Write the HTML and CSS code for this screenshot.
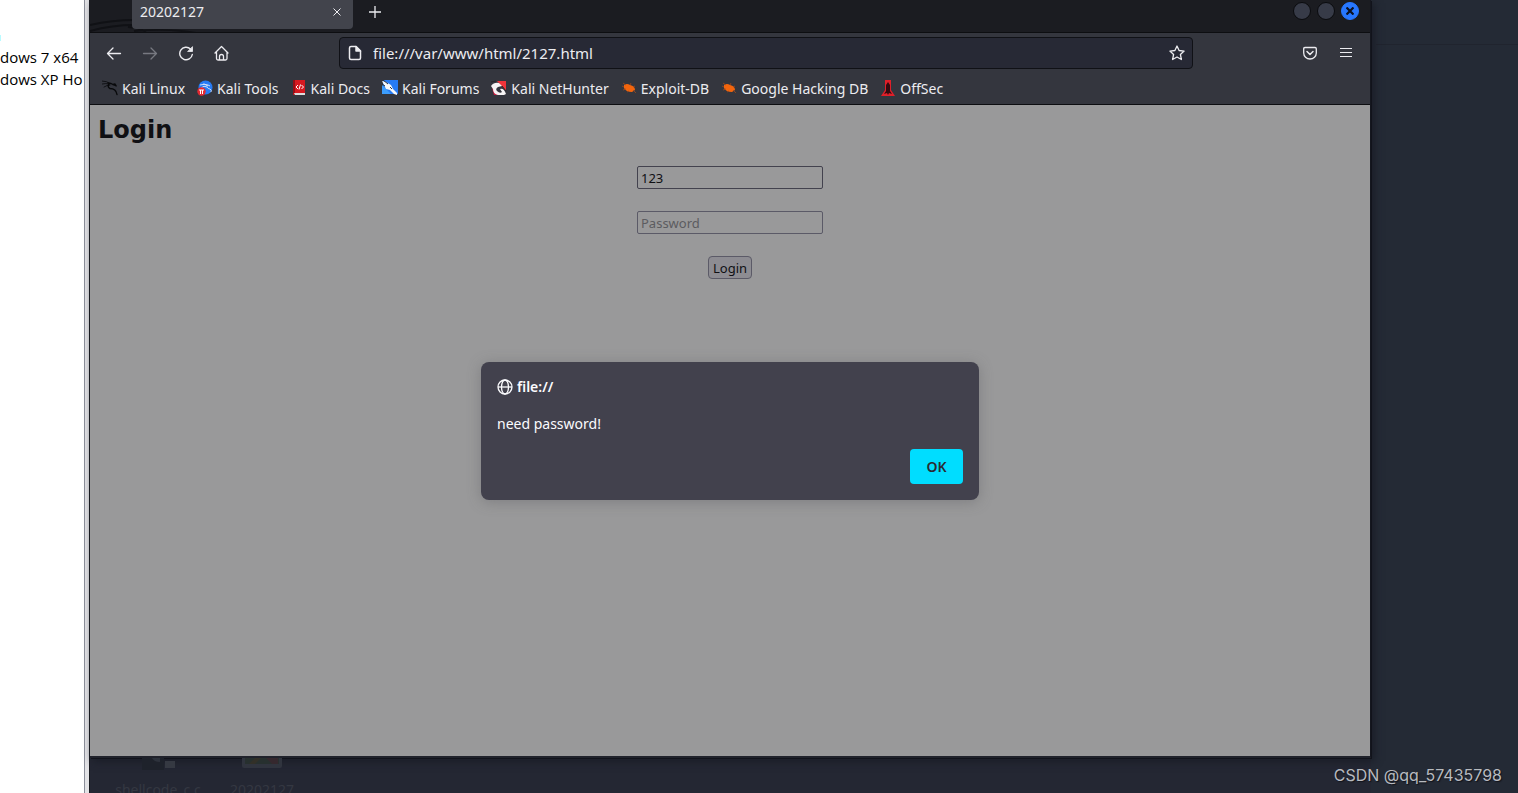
FILE: index.html
```html
<!DOCTYPE html>
<html lang="en">
<head>
<meta charset="utf-8">
<title>20202127</title>
<link rel="stylesheet" href="styles.css">
</head>
<body>
<div class="screen">
  <aside class="library">
    <span class="library-mark"></span>
    <p class="library-item">dows 7 x64</p>
    <p class="library-item">dows XP Ho</p>
  </aside>
  <div class="desktop">
    <section class="window">
      <header class="tabs">
        <svg class="tabs-art" width="160" height="32" viewBox="0 0 160 32" fill="none" stroke="#101115" aria-hidden="true"><path d="M0 25Q22 20 45 20M0 31Q22 25 45 25" stroke-width="2"/><path d="M44 31Q80 28 106 33M38 27Q50 28 56 32" stroke-width="2"/></svg>
        <div class="tab">
          <span class="tab-title">20202127</span>
          <button class="tab-close" aria-label="Close tab"><svg width="8" height="8" viewBox="0 0 8 8" fill="none" stroke="currentColor"><path d="M.5.5l7 7M7.5.5l-7 7"/></svg></button>
        </div>
        <button class="icon-button new-tab" aria-label="New tab"><svg width="12" height="12" viewBox="0 0 12 12" fill="none" stroke="currentColor" stroke-width="1.3"><path d="M6 0v12M0 6h12"/></svg></button>
        <div class="window-controls">
          <button class="round" aria-label="Minimize"></button>
          <button class="round" aria-label="Maximize"></button>
          <button class="round round-close" aria-label="Close window"><svg width="8" height="8" viewBox="0 0 8 8" fill="none" stroke="#0b1020" stroke-width="2.2"><path d="M.5.5l7 7M7.5.5l-7 7"/></svg></button>
        </div>
      </header>
      <nav class="toolbar" aria-label="Navigation">
        <div class="nav-buttons">
          <button class="icon-button" aria-label="Back"><svg width="16" height="16" viewBox="0 0 16 16" fill="none" stroke="currentColor" stroke-width="1.3" stroke-linecap="round" stroke-linejoin="round"><path d="M14.500 8.500H1.500M7 3L1.500 8.500 7 14"/></svg></button>
          <button class="icon-button dim" aria-label="Forward" disabled><svg width="16" height="16" viewBox="0 0 16 16" fill="none" stroke="currentColor" stroke-width="1.3" stroke-linecap="round" stroke-linejoin="round"><path d="M1.500 8.500h13M9 3l5.500 5.500L9 14"/></svg></button>
          <button class="icon-button" aria-label="Reload"><svg width="16" height="16" viewBox="0 0 16 16" fill="none" stroke="currentColor" stroke-width="1.4" stroke-linecap="round"><path d="M14.300 9.500A6.300 6.300 0 1 1 12.500 4"/><path d="M14.500 2v4.500H10z" fill="currentColor" stroke-width=".8"/></svg></button>
          <button class="icon-button" aria-label="Home"><svg width="16" height="16" viewBox="0 0 16 16" fill="none" stroke="currentColor" stroke-width="1.3" stroke-linecap="round" stroke-linejoin="round"><path d="M1 8l6.500-6.500L14 8M2.500 7.500v6q0 1.500 1.500 1.500h7.500q1.500 0 1.500-1.500v-6M5.500 15v-3.500q0-2 2-2t2 2V15"/></svg></button>
        </div>
        <div class="address">
          <svg width="16" height="16" viewBox="0 0 16 16" fill="none" stroke="currentColor" stroke-width="1.5" stroke-linejoin="round" aria-hidden="true"><path d="M4 1.500h5L13.500 6v7q0 1.500-1.500 1.500H4Q2.500 14.500 2.500 13V3Q2.500 1.500 4 1.500z"/><path d="M9 1.500V6h4.500z" fill="currentColor"/></svg>
          <input class="address-input" type="text" aria-label="Address" value="file:///var/www/html/2127.html">
          <button class="icon-plain" aria-label="Bookmark this page"><svg width="16" height="16" viewBox="0 0 16 16" fill="none" stroke="currentColor" stroke-width="1.3" stroke-linejoin="round"><path d="M8 1l2.100 4.500 5 .6-3.700 3.400 1 5L8 12l-4.400 2.500 1-5L.9 6.100l5-.6z"/></svg></button>
        </div>
        <div class="tool-buttons">
          <button class="icon-button" aria-label="Pocket"><svg width="14" height="14" viewBox="0 0 14 14" fill="none" stroke="currentColor" stroke-width="1.3" stroke-linecap="round" stroke-linejoin="round"><path d="M2 1.500h10q1.300 0 1.300 1.300V7A6.300 6 0 0 1 .7 7V2.800Q.7 1.500 2 1.500z"/><path d="M4 5.500l3 3 3-3" stroke-width="1.500"/></svg></button>
          <button class="icon-button" aria-label="Menu"><svg width="12" height="12" viewBox="0 0 12 12" stroke="currentColor"><path d="M0 1.500h12M0 5.500h12M0 9.500h12"/></svg></button>
        </div>
      </nav>
      <nav class="bookmarks" aria-label="Bookmarks">
        <a class="bookmark" href="#"><svg width="16" height="16" viewBox="0 0 16 16" fill="none" stroke="#08090b" stroke-linecap="round" stroke-linejoin="round"><path d="M0 1q5 0 8 2.500M0 4q4-1 7 0M2 7q3-2 6-2" stroke-width=".8"/><path d="M6 3q3 0 5 1.500l3 1M7 4Q5 7 8 8.500q6 0 7 6M11 4.500l2-.5 1 2" stroke-width="1.400"/></svg><span>Kali Linux</span></a>
        <a class="bookmark" href="#"><svg width="16" height="16" viewBox="0 0 16 16"><circle cx="8.500" cy="7.500" r="7" fill="#277bf4"/><path d="M3 5q5-2 8 1M4 8q3-3 6-1 1 2 3 2 2 1 1 3M6 4l5 1 2 1" fill="none" stroke="#dbe8fb" stroke-width=".9"/><circle cx="4.500" cy="11.500" r="4.200" fill="#e32831"/><path d="M2 10h5M3.500 10v4M5.500 10v4" stroke="#fff"/></svg><span>Kali Tools</span></a>
        <a class="bookmark" href="#"><svg width="16" height="16" viewBox="0 0 16 16"><path d="M2 0h12v13H2z" fill="#d71920"/><path d="M2 0h2v13H2z" fill="#960e15"/><path d="M3 13h11v2H3z" fill="#ddd"/><path d="M2 13h1l1 2H2z" fill="#b10f18"/><path d="M7 5L5 7l2 2M10.500 5l2 2-2 2M9.500 4.500l-1.500 5" fill="none" stroke="#fff"/></svg><span>Kali Docs</span></a>
        <a class="bookmark" href="#"><svg width="16" height="16" viewBox="0 0 16 16"><path d="M1 0h15v14H1z" fill="#277bf4"/><path d="M0 5v9h9z" fill="#3c9dfc"/><path d="M0 1l4 1 5 3 2 4 4 4v2l-3-1-4-4-4-1-2-4z" fill="#f6f8fb"/><path d="M1 0l5 4M0 4l3 2M8 7l2 2" stroke="#2b3038"/></svg><span>Kali Forums</span></a>
        <a class="bookmark" href="#"><svg width="16" height="16" viewBox="0 0 16 16"><path d="M6 1h9v10z" fill="#f0343a"/><path d="M1 8l9 7H3z" fill="#c8173b"/><path d="M0 6q3-4 8-3l3 3-4 1q-3 2-1 4 3 3 5 1l-2-3q4-1 6 5l-2 1H7Q2 14 2 9z" fill="#f5f3f4"/><path d="M0 2l5-1M11 6l4 5" stroke="#25262b" fill="none"/></svg><span>Kali NetHunter</span></a>
        <a class="bookmark" href="#"><svg width="16" height="16" viewBox="0 0 16 16"><path d="M3 5q3-2 6 0 5 1 5 5l-3 2Q5 12 3 8z" fill="#f3650d"/><path d="M5 5L2 3M9 5l1-2M12 7l2-1M3 7L1 6M5 9l-3 1M8 11l-2 1M12 10l3 3" stroke="#9c491f" stroke-width=".8"/></svg><span>Exploit-DB</span></a>
        <a class="bookmark" href="#"><svg width="16" height="16" viewBox="0 0 16 16"><path d="M3 5q3-2 6 0 5 1 5 5l-3 2Q5 12 3 8z" fill="#f3650d"/><path d="M5 5L2 3M9 5l1-2M12 7l2-1M3 7L1 6M5 9l-3 1M8 11l-2 1M12 10l3 3" stroke="#9c491f" stroke-width=".8"/></svg><span>Google Hacking DB</span></a>
        <a class="bookmark" href="#"><svg width="16" height="16" viewBox="0 0 16 16"><path d="M5 0h6v10l4 6H1l4-6z" fill="#df1f29"/><path d="M8 2l2 3v6l2 3-3-1-1 2-1-2-3 1 2-3V5z" fill="#340a10"/></svg><span>OffSec</span></a>
      </nav>
      <main class="page">
        <h1 class="page-title">Login</h1>
        <form class="login">
          <input class="field" type="text" aria-label="Username" value="123">
          <input class="field field-empty" type="password" aria-label="Password" placeholder="Password">
          <button class="login-button" type="button">Login</button>
        </form>
        <div class="dialog" role="alertdialog" aria-labelledby="origin" aria-describedby="message">
          <h2 class="dialog-title" id="origin"><svg width="16" height="16" viewBox="0 0 16 16" fill="none" stroke="currentColor" stroke-width="1.300" aria-hidden="true"><circle cx="8" cy="8" r="7"/><ellipse cx="8" cy="8" rx="3.500" ry="7"/><path d="M1 8h14"/></svg>file://</h2>
          <p class="dialog-message" id="message">need password!</p>
          <button class="dialog-ok" type="button">OK</button>
        </div>
      </main>
    </section>
    <footer class="desktop-icons">
      <div class="file"><svg width="44" height="12" viewBox="0 0 44 12" aria-hidden="true"><path d="M6 0h22v12H6z" fill="#1e222b"/><path d="M16 0q2 4 8 4V0z" fill="#2d323c"/><path d="M29 3h10v7H29z" fill="#353942"/></svg><span>shellcode_c.c</span></div>
      <div class="file"><svg width="44" height="12" viewBox="0 0 44 12" aria-hidden="true"><path d="M2 0h40v8q0 2-2 2H4q-2 0-2-2z" fill="#30343e"/><path d="M5 0h34v6H5z" fill="#27302f"/><path d="M9 6l6-6h6l-6 6z" fill="#323028"/><path d="M26 0h12v6h-6z" fill="#35282e"/></svg><span>20202127</span></div>
    </footer>
    <span class="watermark">CSDN @qq_57435798</span>
  </div>
</div>
</body>
</html>
```
FILE: styles.css
```css
* { box-sizing: border-box; }
body { margin: 0; font-family: "Noto Sans", sans-serif; font-size: 14px; color: #ececf0; }
button, input { font: inherit; color: inherit; }
button { padding: 0; border: 0; background: none; }
svg { display: block; flex: none; }
.screen { display: flex; height: 100vh; overflow: hidden; background: #242833; }
.library { flex: none; width: 90px; padding-top: 35px; overflow: hidden; background: #fff; color: #000; border-right: 1px solid #17191f; box-shadow: inset -4px 0 #e3e3e6, inset -5px 0 #8b8e99; font-family: "Open Sans", sans-serif; font-size: 15px; line-height: 22px; white-space: nowrap; }
.library-mark { display: block; width: 1px; height: 6px; margin-bottom: 5px; background: #b9fbff; }
.library-item { width: 84px; margin: 0; overflow: hidden; }
.desktop { position: relative; flex: 1; min-width: 0; display: flex; flex-direction: column; padding-right: 147px; background: linear-gradient(#20242e, #20242e) right 44px / 142px 1px no-repeat, linear-gradient(#242a35, #242a35) right / 147px 100% no-repeat, #242733; background-position: right 0 top 44px, right top, 0 0; }
.window { flex: 1; min-height: 0; display: flex; flex-direction: column; border-right: 1px solid #15171f; border-bottom: 2px solid #20222b; box-shadow: 1px 1px #11131b, 3px 3px 8px #191c26; }
.tabs { position: relative; display: flex; align-items: flex-start; height: 33px; padding: 0 11px 0 42px; background: #1b1c21; border-bottom: 1px solid #0d0e11; }
.tabs-art { position: absolute; left: 0; top: 0; }
.tab { position: relative; display: flex; align-items: center; justify-content: space-between; width: 221px; height: 29px; padding: 0 12px 6px 8px; background: #42444c; border-radius: 0 0 4px 4px; }
.tab-title { line-height: 20px; }
.window .new-tab { height: 24px; margin-left: 4px; }
.window-controls { display: flex; gap: 6px; margin-left: auto; padding-top: 2px; }
.round { display: grid; place-items: center; width: 18px; height: 18px; border: 1px solid #0a0b0e; border-radius: 50%; background: #373b48; }
.round-close { border-color: #2777ff; background: #2777ff; }
.toolbar { display: flex; align-items: center; gap: 99px; height: 40px; padding: 0 6px; background: #34363e; }
.nav-buttons, .tool-buttons { display: flex; }
.tool-buttons { margin-left: auto; }
.icon-button { display: grid; place-items: center; width: 36px; height: 36px; }
.dim { color: #777981; }
.address { display: flex; align-items: center; gap: 10px; flex: 1; height: 32px; padding: 0 7px; background: #272935; border: 1px solid #101116; border-radius: 4px; }
.address-input { flex: 1; min-width: 0; padding: 0; border: 0; outline: 0; background: none; font-size: 15px; line-height: 20px; }
.bookmarks { display: flex; gap: 12px; height: 32px; padding: 5px 12px; background: #34363e; border-bottom: 1px solid #0d0e11; white-space: nowrap; }
.bookmark { display: flex; align-items: center; gap: 4px; height: 20px; color: inherit; text-decoration: none; }
.page { position: relative; flex: 1; min-height: 0; padding: 8px; background: #99999a; color: #101014; }
.page-title { margin: 0 0 18px; font-family: "DejaVu Sans", sans-serif; font-size: 24px; line-height: 35px; }
.login { display: flex; flex-direction: column; align-items: center; gap: 22px; font-size: 13px; }
.field { width: 186px; height: 23px; padding: 1px 3px; border: 1px solid #43424e; border-radius: 2px; background: none; outline: 0; }
.field-empty { border-color: #5b5a67; }
.field::placeholder { color: #5c5c60; opacity: 1; }
.login-button { height: 23px; padding: 0 4px; border: 1px solid #5b5a67; border-radius: 4px; background: #8d8c92; }
.dialog { position: absolute; top: 257px; right: 0; left: 0; display: flex; flex-direction: column; width: 498px; margin: 0 auto; padding: 16px; border-radius: 8px; background: #42414d; color: #fbfbfe; box-shadow: 0 2px 14px #58585c66; }
.dialog-title { display: flex; align-items: center; gap: 4px; margin: 0 0 18px; font-size: 14px; font-weight: 600; line-height: 18px; }
.dialog-message { margin: 0 0 15px; line-height: 20px; }
.dialog-ok { align-self: flex-end; width: 53px; height: 35px; border-radius: 4px; background: #00ddff; color: #2b2a33; font-weight: 600; }
.desktop-icons { flex: none; display: flex; gap: 4px; height: 35px; padding: 0 18px; color: #343842; line-height: 20px; white-space: nowrap; }
.file { display: flex; flex-direction: column; align-items: center; gap: 10px; width: 100px; }
.watermark { position: absolute; right: 16px; bottom: 8px; font-family: Inter, "Liberation Sans", sans-serif; font-size: 16px; line-height: 20px; color: #b7babf; text-shadow: 1px 1px 1px #11131a; }
```
